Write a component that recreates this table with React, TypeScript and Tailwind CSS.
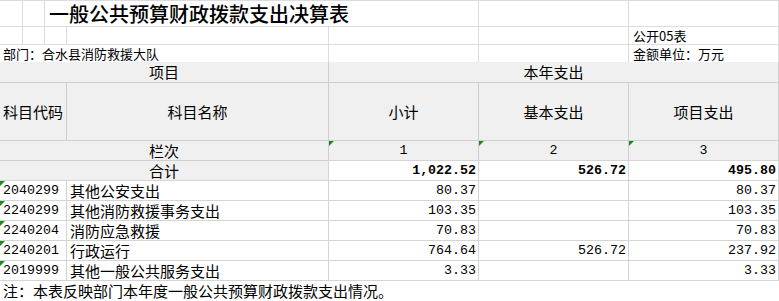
import React from "react";

function Tri() {
  return (
    <span className="absolute left-0 top-0 w-0 h-0 border-t-[5px] border-r-[5px] border-t-[#1a8a1a] border-r-transparent" />
  );
}

type C = { cls?: string; children?: React.ReactNode; tri?: boolean };
function Cell({ cls = "", children, tri }: C) {
  return (
    <div className={"relative flex overflow-hidden whitespace-nowrap " + cls}>
      {tri && <Tri />}
      {children}
    </div>
  );
}

const rows = [
  ["2040299", "其他公安支出", "80.37", "", "80.37"],
  ["2240299", "其他消防救援事务支出", "103.35", "", "103.35"],
  ["2240204", "消防应急救援", "70.83", "", "70.83"],
  ["2240201", "行政运行", "764.64", "526.72", "237.92"],
  ["2019999", "其他一般公共服务支出", "3.33", "", "3.33"],
];

const M = " font-['Liberation_Mono',monospace]";

export default function App() {
  const g = "border-t border-l border-[#dcdcdc]";
  const h = "border-t border-l border-[#cfcfcf] bg-[#f0f0f0]";
  const d = "border-t border-l border-[#d4d4d4] bg-white";
  const num = " items-center justify-end pr-[2px] text-[13.3px] leading-[18px]" + M;
  return (
    <div className="w-[779px] h-[301px] bg-white text-black overflow-hidden font-['Noto_Sans_CJK_SC',sans-serif]">
      <div className="grid grid-cols-[22px_22px_22px_262px_150px_150px_151px] grid-rows-[26px_18px_18px_20px_58px_20px_20px_20px_20px_20px_20px_20px_21px]">
        {/* row 0 */}
        <Cell cls="border-t border-[#dcdcdc]" />
        <Cell cls={g} />
        <Cell cls={g + " col-span-3 items-center pl-[4px] text-[20px] font-medium leading-[24px]"}>
          一般公共预算财政拨款支出决算表
        </Cell>
        <Cell cls={g} />
        <Cell cls={g + " border-r"} />
        {/* row 1 */}
        <Cell cls="border-t border-[#dcdcdc]" />
        <Cell cls={g} />
        <Cell cls={g} />
        <Cell cls={g} />
        <Cell cls={g} />
        <Cell cls={g} />
        <Cell cls={g + " border-r items-end pl-[4px] text-[13px] leading-[16px]"}>公开05表</Cell>
        {/* row 2 */}
        <Cell cls="border-t border-[#dcdcdc] col-span-4 items-end pl-[3px] text-[13px] leading-[16px]">
          部门：合水县消防救援大队
        </Cell>
        <Cell cls={g} />
        <Cell cls={g} />
        <Cell cls={g + " border-r items-end pl-[4px] text-[13px] leading-[16px]"}>金额单位：万元</Cell>
        {/* row 3 */}
        <Cell cls="bg-[#f0f0f0] col-span-4 items-center justify-center text-[15px] leading-[18px]">项目</Cell>
        <Cell cls="border-l border-r border-[#cfcfcf] bg-[#f0f0f0] col-span-3 items-center justify-center text-[15px] leading-[18px]">
          本年支出
        </Cell>
        {/* row 4 */}
        <Cell cls="border-t border-[#cfcfcf] bg-[#f0f0f0] col-span-3 items-center pl-[3px] text-[15px] leading-[18px]">科目代码</Cell>
        <Cell cls={h + " items-center justify-center text-[15px] leading-[18px]"}>科目名称</Cell>
        <Cell cls={h + " items-center justify-center text-[15px] leading-[18px]"}>小计</Cell>
        <Cell cls={h + " items-center justify-center text-[15px] leading-[18px]"}>基本支出</Cell>
        <Cell cls={h + " border-r items-center justify-center text-[15px] leading-[18px]"}>项目支出</Cell>
        {/* row 5 */}
        <Cell cls="border-t border-[#cfcfcf] bg-[#f0f0f0] col-span-4 items-center justify-center text-[15px] leading-[18px]">栏次</Cell>
        <Cell tri cls={h + " items-center justify-center text-[13.3px] leading-[18px]" + M}>1</Cell>
        <Cell tri cls={h + " items-center justify-center text-[13.3px] leading-[18px]" + M}>2</Cell>
        <Cell tri cls={h + " border-r items-center justify-center text-[13.3px] leading-[18px]" + M}>3</Cell>
        {/* row 6 */}
        <Cell cls="border-t border-[#cfcfcf] bg-[#f0f0f0] col-span-4 items-center justify-center text-[15px] leading-[18px]">合计</Cell>
        <Cell cls={d + num + " font-bold"}>1,022.52</Cell>
        <Cell cls={d + num + " font-bold"}>526.72</Cell>
        <Cell cls={d + num + " font-bold border-r"}>495.80</Cell>
        {/* data rows */}
        {rows.map((r) => (
          <React.Fragment key={r[0]}>
            <Cell tri cls={"border-t border-[#d4d4d4] col-span-3 items-center pl-[3px] text-[13.3px] leading-[18px]" + M}>
              {r[0]}
            </Cell>
            <Cell cls={d + " items-center pl-[3px] text-[15px] leading-[18px]"}>{r[1]}</Cell>
            <Cell cls={d + num}>{r[2]}</Cell>
            <Cell cls={d + num}>{r[3]}</Cell>
            <Cell cls={d + num + " border-r"}>{r[4]}</Cell>
          </React.Fragment>
        ))}
        {/* note */}
        <Cell cls="border-t border-[#d4d4d4] col-span-7 items-center pl-[3px] text-[15px] leading-[18px]">
          注：本表反映部门本年度一般公共预算财政拨款支出情况。
        </Cell>
      </div>
    </div>
  );
}
